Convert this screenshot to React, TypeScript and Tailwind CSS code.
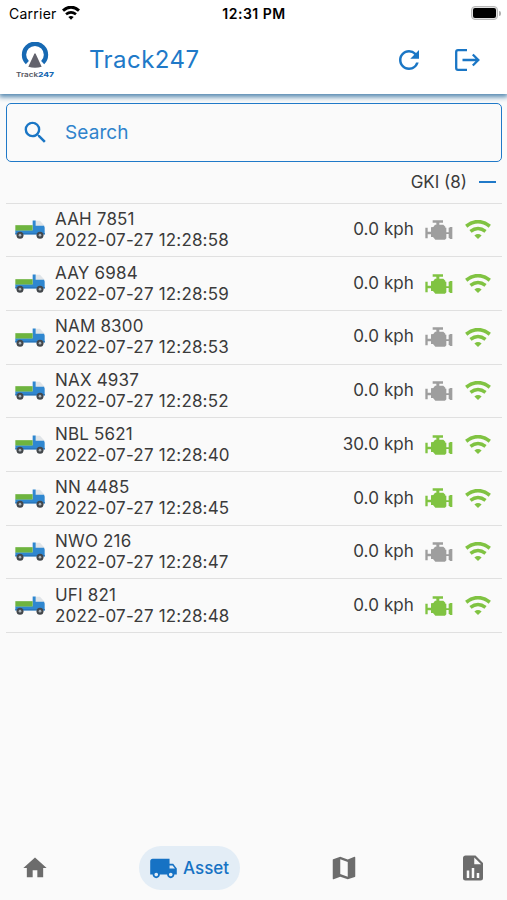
import React from "react";
import clsx from "clsx";

interface Asset {
  name: string;
  time: string;
  speed: string;
  running: boolean;
}

const assets: Asset[] = [
  { name: "AAH 7851", time: "2022-07-27 12:28:58", speed: "0.0", running: false },
  { name: "AAY 6984", time: "2022-07-27 12:28:59", speed: "0.0", running: true },
  { name: "NAM 8300", time: "2022-07-27 12:28:53", speed: "0.0", running: false },
  { name: "NAX 4937", time: "2022-07-27 12:28:52", speed: "0.0", running: false },
  { name: "NBL 5621", time: "2022-07-27 12:28:40", speed: "30.0", running: true },
  { name: "NN 4485", time: "2022-07-27 12:28:45", speed: "0.0", running: true },
  { name: "NWO 216", time: "2022-07-27 12:28:47", speed: "0.0", running: false },
  { name: "UFI 821", time: "2022-07-27 12:28:48", speed: "0.0", running: true },
];

function Wifi({ className }: { className?: string }) {
  return (
    <svg viewBox="0 0 78 58" fill="none" className={className}>
      <path d="M3 19Q39-9 75 19" stroke="currentColor" strokeWidth="11" />
      <path d="M16 35Q39 17 62 35" stroke="currentColor" strokeWidth="10.500" />
      <path d="M28 47Q39 38 50 47L39 58Z" fill="currentColor" />
    </svg>
  );
}

function Engine({ className }: { className?: string }) {
  return (
    <svg viewBox="0 0 84 60" fill="currentColor" className={className}>
      <path d="M23 1h31v7H43v6h12l6 6v3h3v14h7V23h2l2-2h7v36h-7l-2-3h-2V42h-7v13l-4 4H31l-7-8h-6v-8h-10v12H1V23h7v12h10V22l7-1 5-7h4V8H23z" />
    </svg>
  );
}

function Truck() {
  return (
    <svg viewBox="0 0 90 56" className="h-[19px] w-[30px]">
      <path d="M62 2h13l13 14v4H62z" fill="#dfe4e8" />
      <path d="M53 1h9v16h25l2 5v20H1V30h52z" fill="#2f87d0" />
      <path d="M1 15h52v16H1z" fill="#6eb43f" />
      <path d="M1 39h89v4H1z" fill="#2874b8" />
      <circle cx="15" cy="45" r="10.500" fill="#43474b" />
      <circle cx="15" cy="45" r="4" fill="#a9b0b5" />
      <circle cx="75" cy="45" r="10.500" fill="#43474b" />
      <circle cx="75" cy="45" r="4" fill="#a9b0b5" />
    </svg>
  );
}

function StatusBar() {
  return (
    <div className="grid h-7 grid-cols-3 items-center pr-[6px] pl-[9px] text-black">
      <div className="flex items-center gap-[5px]">
        <span className="text-[14px] leading-4 tracking-[0.25px]">Carrier</span>
        <svg viewBox="0 0 54 42" fill="none" className="mb-[2px] h-[14px] w-[18px]">
          <path d="M3 14Q27-7 51 14" stroke="#000" strokeWidth="9" />
          <path d="M12 25Q27 13 42 25" stroke="#000" strokeWidth="8" />
          <path d="M19 33Q27 27 35 33L27 41Z" fill="#000" />
        </svg>
      </div>
      <div className="pr-[2px] text-center text-[14px] leading-4 font-semibold tracking-[0.5px]">12:31 PM</div>
      <div className="flex items-center justify-end pb-[2px]">
        <div className="h-[14px] w-[27px] rounded-[4px] border border-[#b8b8b8] bg-[#e2e2e2] p-[1px]">
          <div className="h-full rounded-[2px] bg-black" />
        </div>
        <div className="ml-px h-[5px] w-[2px] rounded-r-full bg-[#b0b0b0]" />
      </div>
    </div>
  );
}

function Header() {
  return (
    <header className="relative h-[94px] bg-white shadow-[0_2px_5px_1px_#5488b0]">
      <StatusBar />
      <div className="flex h-[64px] items-center pr-[26px] pl-[15px]">
        <svg viewBox="0 0 120 108" className="h-9 w-10 shrink-0">
          <path d="M37 62A33 33 0 1 1 83 62" fill="none" stroke="#1769b3" strokeWidth="13" />
          <path d="M60 34Q62 34 64 40L80 74Q60 80 40 74L56 40Q58 34 60 34Z" fill="#62626c" />
          <text x="3" y="104" textLength="66" lengthAdjust="spacingAndGlyphs" fontSize="19" fontWeight="600" fill="#55555e">
            Track
          </text>
          <text x="69" y="104" textLength="48" lengthAdjust="spacingAndGlyphs" fontSize="19" fontWeight="800" fill="#1769b3">
            247
          </text>
        </svg>
        <h1 className="ml-[34px] text-[24px] leading-8 tracking-[0.45px] text-[#2079c8]">Track247</h1>
        <div className="ml-auto flex items-center gap-[30px] text-[#1a76c5]">
          <svg viewBox="0 0 24 24" fill="currentColor" className="h-[30px] w-[30px]">
            <path d="M17.65 6.35A7.958 7.958 0 0 0 12 4c-4.42 0-7.99 3.58-7.99 8s3.57 8 7.99 8c3.73 0 6.84-2.55 7.73-6h-2.08A5.99 5.99 0 0 1 12 18c-3.31 0-6-2.69-6-6s2.69-6 6-6c1.66 0 3.14.69 4.22 1.78L13 11h7V4l-2.350 2.350z" />
          </svg>
          <svg viewBox="0 0 26 24" fill="none" stroke="currentColor" strokeWidth="2.300" className="mr-px h-6 w-[26px]">
            <path d="M13 2.200H4Q2.200 2.200 2.200 4V20Q2.200 21.800 4 21.800H13" />
            <path d="M8.500 12H24M18.800 6.500L24.300 12L18.800 17.500" />
          </svg>
        </div>
      </div>
    </header>
  );
}

function AssetRow({ name, time, speed, running }: Asset) {
  return (
    <div className="flex h-[53.7px] items-center border-b-[1.5px] border-[#e0e0e0] pr-[11px] pl-[9px]">
      <Truck />
      <div className="ml-[10px] text-[17px] leading-[21px] tracking-[0.18px]">
        <div>{name}</div>
        <div>{time}</div>
      </div>
      <div className="ml-auto text-[17px] tracking-[0.1px]">{speed} kph</div>
      <Engine className={clsx("ml-[11px] h-5 w-7", running ? "text-[#80c342]" : "text-[#9e9e9e]")} />
      <Wifi className="ml-[12px] h-[19px] w-[26px] text-[#80c342]" />
    </div>
  );
}

function BottomNav() {
  return (
    <nav className="flex h-[64px] items-center pl-[21px] text-[#6c6c6c]">
      <svg viewBox="0 0 24 24" fill="currentColor" className="h-7 w-7">
        <path d="M10 20v-6h4v6h5v-8h3L12 3 2 12h3v8z" />
      </svg>
      <div className="ml-[90px] flex h-[44px] w-[101px] items-center rounded-full bg-[#e3edf6] pl-[10px] text-[#1672c4]">
        <svg viewBox="0 0 24 24" fill="currentColor" className="h-[29px] w-[29px]">
          <path d="M20 8h-3V4H3c-1.100 0-2 .9-2 2v11h2c0 1.660 1.340 3 3 3s3-1.340 3-3h6c0 1.660 1.340 3 3 3s3-1.340 3-3h2v-5l-3-4zM6 18.500c-.83 0-1.500-.67-1.500-1.500s.67-1.500 1.500-1.500 1.500.67 1.500 1.500-.67 1.500-1.500 1.500zm13.500-9l1.960 2.500H17V9.500h2.500zm-1.500 9c-.83 0-1.500-.67-1.500-1.500s.67-1.500 1.500-1.500 1.500.67 1.500 1.500-.67 1.500-1.500 1.500z" />
        </svg>
        <span className="ml-[5px] pt-px text-[17px] font-medium">Asset</span>
      </div>
      <svg viewBox="0 0 24 24" fill="currentColor" className="ml-[89px] h-[30px] w-[30px]">
        <path d="M20.500 3l-.16.03L15 5.100 9 3 3.360 4.900c-.21.07-.36.25-.36.48V20.500c0 .28.22.5.5.5l.16-.03L9 18.900l6 2.100 5.640-1.900c.21-.07.36-.25.36-.48V3.500c0-.28-.22-.5-.5-.5zM15 19l-6-2.110V5l6 2.110V19z" />
      </svg>
      <svg viewBox="0 0 24 24" fill="currentColor" className="ml-[99px] h-[30px] w-[30px]">
        <path d="M13 9h5.500L13 3.500V9M6 2h8l6 6v12a2 2 0 0 1-2 2H6a2 2 0 0 1-2-2V4c0-1.110.89-2 2-2m1 18h2v-6H7v6m4 0h2v-8h-2v8m4 0h2v-4h-2v4z" />
      </svg>
    </nav>
  );
}

function App() {
  return (
    <div className="flex h-[900px] w-[507px] flex-col overflow-hidden bg-[#fafafa] font-['Inter',sans-serif] text-[#3b3b3b]">
      <Header />
      <main className="flex-1 pt-[9px] pr-[5px] pl-[6px]">
        <div className="flex h-[59px] items-center rounded-[5px] border border-solid border-[#2079c8] pl-[14px]">
          <svg viewBox="0 0 24 24" fill="#1a76c5" className="h-[29px] w-[29px]">
            <path d="M15.500 14h-.79l-.28-.27A6.471 6.471 0 0 0 16 9.500 6.500 6.500 0 1 0 9.500 16c1.610 0 3.090-.59 4.230-1.570l.27.28v.79l5 4.990L20.490 19l-4.990-5zm-6 0C7.010 14 5 11.990 5 9.500S7.010 5 9.500 5 14 7.010 14 9.500 11.990 14 9.500 14z" />
          </svg>
          <span className="ml-[15px] pt-px text-[19px] tracking-[0.1px] text-[#2f83cc]">Search</span>
        </div>
        <div className="flex h-[41.500px] items-center justify-end border-b-[1.5px] border-[#e0e0e0] pr-[6px] text-[17px]">
          <span>GKI (8)</span>
          <span className="ml-3 h-[2px] w-[17px] bg-[#2079c8]" />
        </div>
        {assets.map((asset) => (
          <AssetRow key={asset.name} {...asset} />
        ))}
      </main>
      <BottomNav />
    </div>
  );
}

export default App;
